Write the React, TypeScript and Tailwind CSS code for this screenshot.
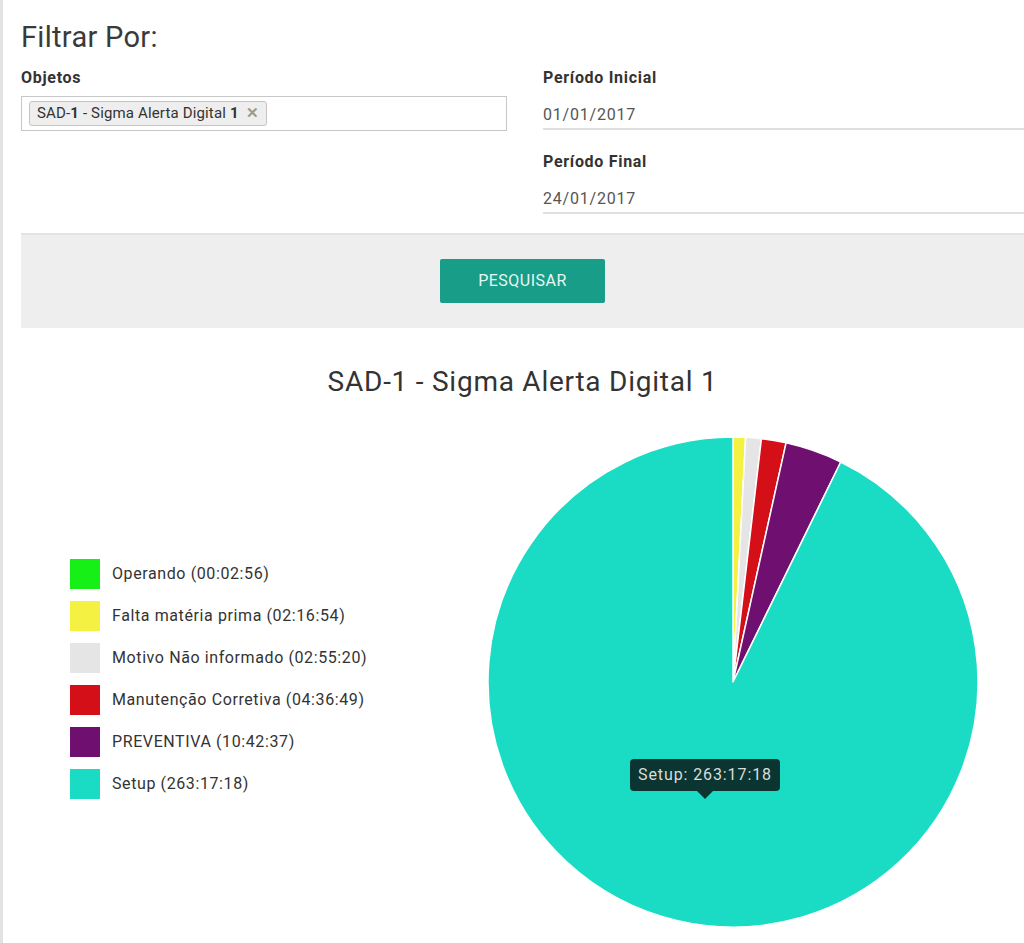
import React from "react";

const data = [
  { label: "Operando", time: "00:02:56", color: "#17f017" },
  { label: "Falta matéria prima", time: "02:16:54", color: "#f4f142" },
  { label: "Motivo Não informado", time: "02:55:20", color: "#e5e5e5" },
  { label: "Manutenção Corretiva", time: "04:36:49", color: "#d40f17" },
  { label: "PREVENTIVA", time: "10:42:37", color: "#6f0f70" },
  { label: "Setup", time: "263:17:18", color: "#1adcc4" },
];

function secs(t: string) {
  const [h, m, s] = t.split(":").map(Number);
  return h * 3600 + m * 60 + s;
}

function Pie() {
  const cx = 250;
  const cy = 250;
  const r = 245;
  const total = data.reduce((a, d) => a + secs(d.time), 0);
  let acc = 0;
  const paths = data.map((d) => {
    const v = secs(d.time);
    const a0 = (acc / total) * Math.PI * 2 - Math.PI / 2;
    acc += v;
    const a1 = (acc / total) * Math.PI * 2 - Math.PI / 2;
    const x0 = cx + r * Math.cos(a0);
    const y0 = cy + r * Math.sin(a0);
    const x1 = cx + r * Math.cos(a1);
    const y1 = cy + r * Math.sin(a1);
    const large = a1 - a0 > Math.PI ? 1 : 0;
    const p = `M${cx},${cy} L${x0},${y0} A${r},${r} 0 ${large} 1 ${x1},${y1} Z`;
    return <path key={d.label} d={p} fill={d.color} stroke="#ffffff" strokeWidth={1.5} strokeLinejoin="round" />;
  });
  return (
    <svg width={500} height={500} viewBox="0 0 500 500">
      {paths}
    </svg>
  );
}

export default function App() {
  return (
    <div
      className="min-h-[943px] w-[1024px] overflow-hidden bg-white border-l-[3px] border-[#e2e2e2] pl-[18px] text-[#333]"
      style={{ fontFamily: "Roboto, 'Noto Sans', sans-serif" }}
    >
      <h1 className="pt-[21px] text-[29px] leading-[32px] font-normal tracking-[0.3px] text-[#3a3a3a]">Filtrar Por:</h1>

      <div className="flex mt-[15px]">
        <div className="w-[486px]">
          <div className="text-[16px] leading-[20px] font-bold tracking-[0.7px] text-[#333]">Objetos</div>
          <div className="mt-[8px] h-[35px] border border-[#c8c8c8] flex items-center px-[7px]">
            <div className="h-[25px] flex items-center gap-[7px] px-[7px] bg-[#eeeeee] border border-[#c4c4c4] rounded-[3px] text-[15px] tracking-[0.15px] text-[#333]">
              <span>
                SAD-<b>1</b> - Sigma Alerta Digital <b>1</b>
              </span>
              <span className="text-[#999] text-[15px] font-bold leading-none">✕</span>
            </div>
          </div>
        </div>
        <div className="ml-[36px] flex-1">
          <div className="text-[16px] leading-[20px] font-bold tracking-[0.7px] text-[#333]">Período Inicial</div>
          <div className="mt-[17px] text-[16px] leading-[20px] text-[#555] tracking-[0.8px]">01/01/2017</div>
          <div className="mt-[3px] h-[2px] bg-[#e0e0e0]"></div>
          <div className="mt-[22px] text-[16px] leading-[20px] font-bold tracking-[0.7px] text-[#333]">Período Final</div>
          <div className="mt-[17px] text-[16px] leading-[20px] text-[#555] tracking-[0.8px]">24/01/2017</div>
          <div className="mt-[3px] h-[2px] bg-[#e0e0e0]"></div>
        </div>
      </div>

      <div className="mt-[19px] h-[95px] bg-[#eeeeee] border-t-2 border-[#e3e3e3] flex justify-center items-start pt-[24px]">
        <button className="w-[165px] h-[44px] bg-[#179d88] rounded-[2px] text-[16px] text-[#e6f7f3] tracking-[0.5px]">
          PESQUISAR
        </button>
      </div>

      <div className="mt-[38px] text-center text-[28px] leading-[32px] tracking-[0.75px] text-[#333]">SAD-1 - Sigma Alerta Digital 1</div>

      <div className="mt-[34px] flex items-center">
        <div className="w-[462px] pl-[49px] pb-[6px] flex flex-col gap-[12px]">
          {data.map((d) => (
            <div key={d.label} className="flex items-center h-[30px]">
              <div className="w-[30px] h-[30px]" style={{ backgroundColor: d.color }}></div>
              <span className="ml-[12px] text-[16px] tracking-[0.6px] text-[#333]">
                {d.label} ({d.time})
              </span>
            </div>
          ))}
        </div>
        <div className="relative w-[500px] h-[500px]">
          <Pie />
          <div className="absolute left-[147px] top-[327px] h-[32px] px-[8px] flex items-center rounded-[4px] bg-[#0b3530] text-[16px] tracking-[0.9px] text-[#dcdcdc] whitespace-nowrap">
            Setup: 263:17:18
            <div className="absolute left-1/2 -translate-x-1/2 top-full w-0 h-0 border-l-[8px] border-r-[8px] border-t-[8px] border-l-transparent border-r-transparent border-t-[#0b3530]"></div>
          </div>
        </div>
      </div>
    </div>
  );
}
